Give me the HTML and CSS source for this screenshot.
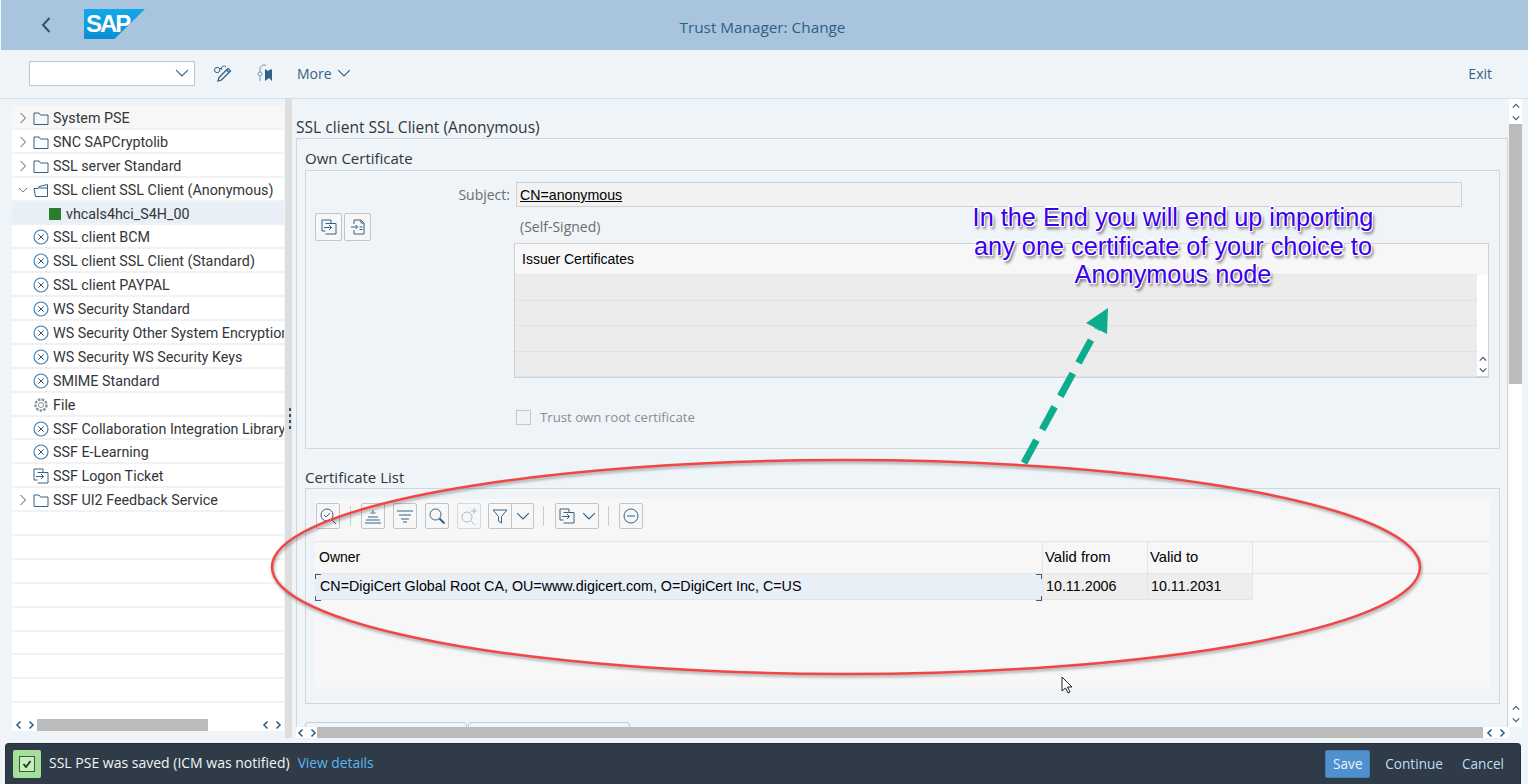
FILE: index.html
```html
<!DOCTYPE html>
<html lang="en">
<head>
    <meta charset="UTF-8">
    <title>Trust Manager: Change</title>
    <link rel="stylesheet" href="styles.css">
</head>
<body>

    <svg class="defs" width="0" height="0">
        <symbol id="i-folder" viewBox="0 0 16 16"><path d="M1 14.500V3h5l1.500 2h7.500v9.500z" fill="none" stroke="currentColor"/></symbol>
        <symbol id="i-folder-open" viewBox="0 0 16 16"><path d="M2.500 14.500L1 6.500h4l1-2 8.500-2v12zM14.500 6H6" fill="none" stroke="currentColor"/></symbol>
        <symbol id="i-cross" viewBox="0 0 16 16"><circle cx="8" cy="8" r="7" fill="none" stroke="#3f7fb5" stroke-width="1.200"/><path d="M5.300 5.300l5.400 5.400M10.700 5.300l-5.400 5.400" fill="none" stroke="#3d4f60"/></symbol>
        <symbol id="i-gear" viewBox="0 0 16 16"><circle cx="8" cy="8" r="5.500" fill="none" stroke="#8a9199" stroke-width="2.400" stroke-dasharray="2.500 1.200"/><circle cx="8" cy="8" r="2.500" fill="none" stroke="#7f93a6"/></symbol>
        <symbol id="i-import" viewBox="0 0 16 16"><path d="M10 4.500V1H1v11h3.500M4.500 4.500h10.500V15H4.500M3 8.500h7.500M8 6l2.500 2.500L8 11" fill="none" stroke="currentColor"/></symbol>
        <symbol id="i-export" viewBox="0 0 16 16"><path d="M4 5V1h7l3 3v11H4v-4M11 1v3h3M1 8h6.500M5.500 6L7.500 8l-2 2M9.500 8h3M9.500 10.500h3" fill="none" stroke="currentColor"/></symbol>
        <symbol id="i-chev-right" viewBox="0 0 10 12"><path d="M2.500 1l5 5-5 5" fill="none" stroke="currentColor"/></symbol>
        <symbol id="i-chev-down" viewBox="0 0 12 10"><path d="M1 2.500l5 5 5-5" fill="none" stroke="currentColor"/></symbol>
        <symbol id="i-small-left" viewBox="0 0 8 10"><path d="M5.500 1.500L2 5l3.500 3.500" fill="none" stroke="currentColor" stroke-width="1.600"/></symbol>
        <symbol id="i-small-right" viewBox="0 0 8 10"><path d="M2.500 1.500L6 5 2.500 8.500" fill="none" stroke="currentColor" stroke-width="1.600"/></symbol>
        <symbol id="i-small-up" viewBox="0 0 12 10"><path d="M2 7l4-4 4 4" fill="none" stroke="currentColor" stroke-width="1.500"/></symbol>
        <symbol id="i-small-down" viewBox="0 0 12 10"><path d="M2 3l4 4 4-4" fill="none" stroke="currentColor" stroke-width="1.500"/></symbol>
    </svg>

    <header class="shell-bar">
        <div class="shell-left">
            <svg class="back" width="12" height="18" viewBox="0 0 12 18"><path d="M9.500 2L3 9l6.500 7" fill="none" stroke="currentColor" stroke-width="2"/></svg>
            <div class="logo"><span>SAP</span></div>
        </div>
        <div class="shell-title">Trust Manager: Change</div>
    </header>

    <div class="toolbar">
        <div class="cmd-field"><svg width="16" height="12"><use href="#i-chev-down"/></svg></div>
        <svg class="tool-icon" width="20" height="20" viewBox="0 0 20 20"><path d="M1.500 7a2.700 2.700 0 1 0 5.400 0 2.700 2.700 0 1 0-5.400 0M7 5.500h2M9 7a2.500 2.500 0 0 1 4-3" fill="none" stroke="currentColor"/><path d="M5 18l1-3.500 9-9 2.500 2.500-9 9zM13.500 7l2.500 2.500" fill="none" stroke="currentColor" stroke-width="1.300"/></svg>
        <svg class="tool-icon second" width="20" height="20" viewBox="0 0 20 20"><path d="M5 9V6a4 4 0 0 1 6-3.500M3 11a2 2 0 1 0 4 0 2 2 0 1 0-4 0M5 13v5" fill="none" stroke="#7d96ad"/><path d="M10 6l3 2 3-2 1 1v11l-3-3-4 3z" fill="currentColor"/></svg>
        <span class="more">More</span>
        <svg class="more-chev" width="14" height="12" viewBox="0 0 12 10"><use href="#i-chev-down"/></svg>
        <span class="exit">Exit</span>
    </div>

    <main class="body-area">
        <aside class="tree-pane">
            <div class="tree-rows">
                <div class="tree-row head"><svg class="exp" width="10" height="12"><use href="#i-chev-right"/></svg><svg class="ico" width="16" height="16"><use href="#i-folder"/></svg><span>System PSE</span></div>
                <div class="tree-row"><svg class="exp" width="10" height="12"><use href="#i-chev-right"/></svg><svg class="ico" width="16" height="16"><use href="#i-folder"/></svg><span>SNC SAPCryptolib</span></div>
                <div class="tree-row"><svg class="exp" width="10" height="12"><use href="#i-chev-right"/></svg><svg class="ico" width="16" height="16"><use href="#i-folder"/></svg><span>SSL server Standard</span></div>
                <div class="tree-row"><svg class="exp" width="10" height="12" viewBox="0 0 12 10"><use href="#i-chev-down"/></svg><svg class="ico" width="16" height="16"><use href="#i-folder-open"/></svg><span>SSL client SSL Client (Anonymous)</span></div>
                <div class="tree-row selected"><i class="green-square"></i><span>vhcals4hci_S4H_00</span></div>
                <div class="tree-row leaf"><svg class="ico" width="16" height="16"><use href="#i-cross"/></svg><span>SSL client BCM</span></div>
                <div class="tree-row leaf"><svg class="ico" width="16" height="16"><use href="#i-cross"/></svg><span>SSL client SSL Client (Standard)</span></div>
                <div class="tree-row leaf"><svg class="ico" width="16" height="16"><use href="#i-cross"/></svg><span>SSL client PAYPAL</span></div>
                <div class="tree-row leaf"><svg class="ico" width="16" height="16"><use href="#i-cross"/></svg><span>WS Security Standard</span></div>
                <div class="tree-row leaf"><svg class="ico" width="16" height="16"><use href="#i-cross"/></svg><span>WS Security Other System Encryption</span></div>
                <div class="tree-row leaf"><svg class="ico" width="16" height="16"><use href="#i-cross"/></svg><span>WS Security WS Security Keys</span></div>
                <div class="tree-row leaf"><svg class="ico" width="16" height="16"><use href="#i-cross"/></svg><span>SMIME Standard</span></div>
                <div class="tree-row leaf"><svg class="ico" width="16" height="16"><use href="#i-gear"/></svg><span>File</span></div>
                <div class="tree-row leaf"><svg class="ico" width="16" height="16"><use href="#i-cross"/></svg><span>SSF Collaboration Integration Library</span></div>
                <div class="tree-row leaf"><svg class="ico" width="16" height="16"><use href="#i-cross"/></svg><span>SSF E-Learning</span></div>
                <div class="tree-row leaf"><svg class="ico" width="16" height="16"><use href="#i-import"/></svg><span>SSF Logon Ticket</span></div>
                <div class="tree-row"><svg class="exp" width="10" height="12"><use href="#i-chev-right"/></svg><svg class="ico" width="16" height="16"><use href="#i-folder"/></svg><span>SSF UI2 Feedback Service</span></div>
                <div class="tree-row"></div>
                <div class="tree-row"></div>
                <div class="tree-row"></div>
                <div class="tree-row"></div>
                <div class="tree-row"></div>
                <div class="tree-row"></div>
                <div class="tree-row"></div>
                <div class="tree-row"></div>
                <div class="tree-row"></div>
            </div>
            <div class="hscroll tree-hscroll">
                <span class="arrows"><svg width="8" height="10"><use href="#i-small-left"/></svg><svg width="8" height="10"><use href="#i-small-right"/></svg></span>
                <div class="track"><i class="thumb"></i></div>
                <span class="arrows"><svg width="8" height="10"><use href="#i-small-left"/></svg><svg width="8" height="10"><use href="#i-small-right"/></svg></span>
            </div>
        </aside>

        <div class="splitter"><i></i><i></i><i></i><i></i></div>

        <section class="content-pane">
            <div class="scroll-area">
                <h1 class="page-title">SSL client SSL Client (Anonymous)</h1>
                <div class="frame">
                    <h2 class="legend">Own Certificate</h2>
                    <div class="group own-cert">
                        <label class="subject-label">Subject:</label>
                        <div class="subject-field">CN=anonymous</div>
                        <div class="cert-buttons">
                            <button class="icon-btn"><svg width="16" height="16"><use href="#i-import"/></svg></button>
                            <button class="icon-btn"><svg width="16" height="16"><use href="#i-export"/></svg></button>
                        </div>
                        <div class="self-signed">(Self-Signed)</div>
                        <div class="issuer-table">
                            <div class="issuer-main">
                                <div class="issuer-head">Issuer Certificates</div>
                                <div class="issuer-row"></div>
                                <div class="issuer-row"></div>
                                <div class="issuer-row"></div>
                                <div class="issuer-row"></div>
                            </div>
                            <div class="issuer-scroll">
                                <svg width="10" height="8" viewBox="0 0 12 10"><use href="#i-small-up"/></svg>
                                <svg width="10" height="8" viewBox="0 0 12 10"><use href="#i-small-down"/></svg>
                            </div>
                        </div>
                        <div class="trust-root"><i class="checkbox"></i><span>Trust own root certificate</span></div>
                    </div>

                    <h2 class="legend list-legend">Certificate List</h2>
                    <div class="group cert-list">
                        <div class="alv-toolbar">
                            <button class="tb-btn"><svg width="20" height="20" viewBox="0 0 20 20"><circle cx="9" cy="9" r="6" fill="none" stroke="currentColor"/><path d="M6 9l2 2 4-4M13 13l5 5" fill="none" stroke="currentColor"/></svg></button>
                            <i class="tb-sep"></i>
                            <button class="tb-btn"><svg width="18" height="18" viewBox="0 0 18 18"><path d="M9 3v2M6.500 6h5M4 10h10M2 13h14M1 16h16" fill="none" stroke="currentColor"/></svg></button>
                            <button class="tb-btn"><svg width="18" height="18" viewBox="0 0 18 18"><path d="M1 4h16M3 8h12M5 12h8M7 15h4" fill="none" stroke="currentColor"/></svg></button>
                            <button class="tb-btn"><svg width="18" height="18" viewBox="0 0 18 18"><circle cx="7.500" cy="7.500" r="5.500" fill="none" stroke="currentColor"/><path d="M11.500 11.500l5 5" fill="none" stroke="currentColor" stroke-width="2"/></svg></button>
                            <button class="tb-btn off"><svg width="20" height="20" viewBox="0 0 20 20"><circle cx="8" cy="11" r="5" fill="none" stroke="currentColor"/><path d="M12 15l4 4M15 2v6M12 5h6" fill="none" stroke="currentColor"/></svg></button>
                            <div class="tb-split">
                                <span><svg width="18" height="18" viewBox="0 0 18 18"><path d="M2 3h14l-5.500 6.500V16l-3-2V9.500z" fill="none" stroke="currentColor"/></svg></span>
                                <span><svg width="14" height="12" viewBox="0 0 12 10"><use href="#i-chev-down"/></svg></span>
                            </div>
                            <i class="tb-sep"></i>
                            <div class="tb-combo">
                                <svg width="16" height="16"><use href="#i-import"/></svg>
                                <svg width="14" height="12" viewBox="0 0 12 10"><use href="#i-chev-down"/></svg>
                            </div>
                            <i class="tb-sep"></i>
                            <button class="tb-btn"><svg width="18" height="18" viewBox="0 0 18 18"><circle cx="9" cy="9" r="7" fill="none" stroke="currentColor"/><path d="M5 9h8" fill="none" stroke="currentColor"/></svg></button>
                        </div>
                        <div class="alv-table">
                            <div class="alv-line alv-head">
                                <div class="col-owner">Owner</div>
                                <div class="col-date">Valid from</div>
                                <div class="col-date">Valid to</div>
                            </div>
                            <div class="alv-line alv-data">
                                <div class="col-owner current">CN=DigiCert Global Root CA, OU=www.digicert.com, O=DigiCert Inc, C=US</div>
                                <div class="col-date">10.11.2006</div>
                                <div class="col-date">10.11.2031</div>
                            </div>
                        </div>
                    </div>

                    <div class="tabs"><span></span><span></span></div>
                </div>
            </div>

            <div class="vscroll">
                <div class="vscroll-arrows">
                    <svg width="10" height="8" viewBox="0 0 12 10"><use href="#i-small-up"/></svg>
                    <svg width="10" height="8" viewBox="0 0 12 10"><use href="#i-small-down"/></svg>
                </div>
                <i class="vthumb"></i>
                <div class="vscroll-arrows bottom">
                    <svg width="10" height="8" viewBox="0 0 12 10"><use href="#i-small-up"/></svg>
                    <svg width="10" height="8" viewBox="0 0 12 10"><use href="#i-small-down"/></svg>
                </div>
            </div>

            <div class="hscroll content-hscroll">
                <span class="arrows"><svg width="8" height="10"><use href="#i-small-left"/></svg><svg width="8" height="10"><use href="#i-small-right"/></svg></span>
                <div class="track"><i class="thumb"></i></div>
                <span class="arrows"><svg width="8" height="10"><use href="#i-small-left"/></svg><svg width="8" height="10"><use href="#i-small-right"/></svg></span>
            </div>
        </section>
    </main>

    <footer class="message-bar">
        <div class="msg-icon"><i><svg width="12" height="12" viewBox="0 0 12 12"><path d="M2.500 6l2.500 3 4.500-6" fill="none" stroke="#1d3b1d" stroke-width="1.800"/></svg></i></div>
        <span class="msg-text">SSL PSE was saved (ICM was notified)</span>
        <a class="msg-link">View details</a>
        <div class="msg-actions">
            <button class="btn-save">Save</button>
            <button class="btn-plain">Continue</button>
            <button class="btn-plain">Cancel</button>
        </div>
    </footer>

    <!-- annotations drawn over the screenshot -->
    <svg class="annotations" width="1528" height="784" viewBox="0 0 1528 784">
        <ellipse class="ring" cx="846" cy="567" rx="574" ry="107"/>
        <path class="arrow-line" d="M1024 463L1097 329"/>
        <path class="arrow-head" d="M1108 308L1086 323L1107 334z"/>
        <path class="pointer" d="M1062 677v14l3.500-3 2.500 5 2-1-2.500-5h4.500z"/>
    </svg>
    <div class="note">In the End you will end up importing<br>any one certificate of your choice to<br>Anonymous node</div>

</body>
</html>
```

FILE: styles.css
```css
* {
    box-sizing: border-box;
}
html, body {
    margin: 0;
    height: 100%;
}
body {
    width: 1528px;
    height: 784px;
    overflow: hidden;
    display: flex;
    flex-direction: column;
    position: relative;
    background-color: #eff4f9;
    color: #32363a;
    font-family: 'Open Sans', 'Liberation Sans', sans-serif;
    font-size: 14px;
}
button {
    font-family: inherit;
}
.defs {
    position: absolute;
}

/* shell */
.shell-bar {
    height: 50px;
    flex: none;
    margin-left: 1px;
    display: grid;
    grid-template-columns: 1fr auto 1fr;
    align-items: center;
    background-color: #a9c5de;
}
.shell-left {
    display: flex;
    align-items: center;
}
.back {
    color: #2d5474;
    margin-left: 39px;
}
.logo {
    width: 61px;
    height: 30px;
    margin: -2px 0 0 32px;
    background: linear-gradient(#12a8ea, #0a8fd2);
    clip-path: polygon(0 0, 100% 0, 50% 100%, 0 100%);
    color: white;
    font: bold 24px/30px 'Liberation Sans', sans-serif;
    letter-spacing: -2px;
    padding-left: 2px;
}
.shell-title {
    color: #2f5f86;
    font-size: 15.300px;
    margin: 3px 4px 0 0;
}

.toolbar {
    height: 49px;
    flex: none;
    display: flex;
    align-items: center;
    padding: 0 0 2px 29px;
    border-bottom: 1px solid #d3e0ec;
    color: #346187;
}
.cmd-field {
    width: 166px;
    height: 25px;
    background-color: white;
    border: 1px solid #bfc5ca;
    display: flex;
    align-items: center;
    justify-content: flex-end;
    padding-right: 5px;
}
.cmd-field svg {
    width: 14px;
}
.tool-icon {
    margin-left: 18px;
}
.tool-icon.second {
    margin-left: 22px;
}
.more {
    margin-left: 22px;
}
.more-chev {
    margin-left: 5px;
}
.exit {
    margin-left: auto;
    margin-right: 36px;
}

/* main */
.body-area {
    flex: 1;
    min-height: 0;
    display: flex;
}
.tree-pane {
    width: 272px;
    margin: 7px 0 12px 12px;
    background-color: white;
    display: flex;
    flex-direction: column;
}
.tree-rows {
    flex: 1;
    min-height: 0;
    overflow: hidden;
}
.tree-row {
    height: 23.900px;
    display: flex;
    align-items: center;
    border-bottom: 2px solid #f2f2f2;
    padding: 2px 0 0 21px;
    white-space: nowrap;
    overflow: hidden;
    font-family: Roboto, 'Open Sans', sans-serif;
    font-size: 14.300px;
    color: #32363a;
}
.tree-row.head {
    background-color: #f7f7f7;
}
.tree-row.selected {
    background-color: #e8eff6;
    padding-left: 37px;
}
.tree-row .exp {
    flex: none;
    margin-left: -15px;
    color: #346187;
}
.ico {
    flex: none;
    color: #346187;
    margin-right: 4px;
    margin-left: 5px;
}
.tree-row.leaf .ico {
    margin-left: 0;
}
.tree-row span {
    flex: none;
}
.green-square {
    width: 12px;
    height: 12px;
    background-color: #2b7d2b;
    margin-right: 5px;
}

.hscroll {
    display: flex;
    align-items: stretch;
    background-color: white;
}
.arrows {
    flex: none;
    color: #346187;
    display: flex;
    align-items: center;
    justify-content: center;
    gap: 4px;
}
.track {
    flex: 1;
}
.thumb {
    display: block;
    height: 100%;
    background-color: #bbbbbb;
}
.tree-hscroll {
    height: 12px;
    flex: none;
}
.tree-hscroll .arrows {
    width: 25px;
}
.tree-hscroll .track .thumb {
    width: 171px;
}

.splitter {
    width: 7px;
    margin: 0 4px 5px 1px;
    background-color: #dedede;
    display: flex;
    flex-direction: column;
    align-items: center;
    justify-content: center;
    gap: 3px;
    padding: 0 0 0 3px;
}
.splitter i {
    width: 2px;
    height: 3px;
    background-color: #2d5474;
}

.content-pane {
    width: 1226px;
    margin-bottom: 5px;
    display: grid;
    grid-template-columns: 1fr 13px;
    grid-template-rows: 1fr 11px;
}
.scroll-area {
    overflow: hidden;
    padding-top: 18px;
}
.page-title {
    margin: 0;
    font-size: 15.600px;
    font-weight: normal;
    line-height: 21px;
    color: #32363a;
}
.frame {
    border: 1px solid #d2d6da;
    border-bottom: 0;
    padding: 0 7px 0 8px;
    margin-right: 1px;
}
.legend {
    margin: 0;
    font-size: 15px;
    font-weight: normal;
    line-height: 20px;
    padding-top: 9px;
    height: 31px;
    color: #32363a;
}
.list-legend {
    height: 39px;
    padding-top: 18px;
}
.group {
    border: 1px solid #d2d6da;
}

/* own certificate */
.own-cert {
    height: 279px;
    display: grid;
    grid-template-columns: 195px 973px;
    column-gap: 6px;
    grid-template-rows: 25px 36px 135px auto;
    padding: 11px 0 0 9px;
}
.subject-label {
    text-align: right;
    color: #6a6d70;
    line-height: 25px;
}
.subject-field {
    width: 946px;
    border: 1px solid #cdd1d5;
    background-color: #f2f2f2;
    padding-left: 3px;
    line-height: 25px;
    color: #000;
    font-family: 'Liberation Sans', sans-serif;
    font-size: 14.200px;
    text-decoration: underline;
}
.cert-buttons {
    grid-row: 2 / span 2;
    display: flex;
    align-items: flex-start;
    gap: 2px;
    margin-top: 6px;
}
.icon-btn {
    width: 27px;
    height: 28px;
    padding: 0;
    border: 1px solid #bfc5ca;
    border-radius: 2px;
    background-color: #f7f7f7;
    color: #346187;
    display: flex;
    align-items: center;
    justify-content: center;
}
.self-signed {
    grid-column: 2;
    grid-row: 2;
    align-self: end;
    margin: 0 0 7px 4px;
    line-height: 19px;
    color: #6a6d70;
}
.issuer-table {
    grid-column: 2;
    grid-row: 3;
    display: flex;
    margin-left: -2px;
    width: 975px;
    border: 1px solid #cfd2d5;
    border-bottom-width: 2px;
    background-color: white;
}
.issuer-main {
    flex: 1;
}
.issuer-head {
    height: 31px;
    line-height: 30px;
    padding-left: 7px;
    background-color: #f7f7f7;
    font-family: 'Liberation Sans', sans-serif;
    color: #000;
    border-bottom: 1px solid #e5e5e5;
}
.issuer-row {
    height: 25.500px;
    background-color: #ececec;
    border-bottom: 1px solid #e2e2e2;
}
.issuer-scroll {
    width: 11px;
    color: #346187;
    display: flex;
    flex-direction: column;
    justify-content: flex-end;
    align-items: center;
    gap: 3px;
    padding-bottom: 2px;
    background: linear-gradient(#f7f7f7 31px, white 31px);
}
.trust-root {
    grid-column: 2;
    grid-row: 4;
    margin-top: 32px;
    display: flex;
    align-items: center;
    height: 15px;
    font-size: 13.200px;
    color: #8a8d90;
}
.trust-root span {
    margin-bottom: 2px;
}
.checkbox {
    width: 15px;
    height: 15px;
    border: 1px solid #c4c8cc;
    background-color: #f2f2f2;
    margin-right: 9px;
}

/* certificate list */
.cert-list {
    height: 216px;
    padding: 10px 9px 0 9px;
}
.alv-toolbar {
    height: 42px;
    padding: 0 0 9px 1px;
    display: flex;
    align-items: center;
    gap: 8px;
    color: #346187;
    background-color: #f7f7f7;
}
.tb-btn {
    width: 24px;
    height: 26px;
    padding: 0;
    border: 1px solid #bfc5ca;
    border-radius: 2px;
    background-color: #f7f7f7;
    color: #346187;
    display: flex;
    align-items: center;
    justify-content: center;
}
.tb-btn.off {
    color: #a9bccd;
    border-color: #d6d9dc;
}
.tb-sep {
    width: 1px;
    height: 20px;
    background-color: #c8ccd0;
    margin: 0 2px;
}
.tb-split, .tb-combo {
    height: 26px;
    display: flex;
    align-items: center;
    border: 1px solid #bfc5ca;
    border-radius: 2px;
    background-color: #f7f7f7;
}
.tb-split {
    margin-left: -1px;
    margin-right: -1px;
}
.tb-split span {
    width: 22px;
    height: 100%;
    display: flex;
    align-items: center;
    justify-content: center;
}
.tb-split span + span {
    border-left: 1px solid #bfc5ca;
}
.tb-combo {
    width: 44px;
    gap: 7px;
    padding-left: 3px;
    margin-left: 1px;
    margin-right: -1px;
}
.alv-table {
    height: 146px;
    background-color: #f7f7f7;
    border-top: 1px solid #e6e6e6;
    font-family: 'Liberation Sans', sans-serif;
    color: #000;
}
.alv-line {
    display: grid;
    grid-template-columns: 728px 105px 105px;
}
.alv-line > div {
    border-right: 1px solid #e4e4e4;
}
.alv-head {
    height: 32px;
    line-height: 30px;
    border-bottom: 1px solid #e6e6e6;
}
.alv-head > div {
    padding-left: 4px;
}
.alv-head .col-date {
    padding-left: 2px;
    font-size: 14.800px;
}
.alv-data {
    height: 26px;
    line-height: 24px;
    font-size: 14.300px;
}
.alv-data > div {
    border-bottom: 1px solid #e4e4e4;
}
.alv-data .col-date {
    background-color: #eeeeee;
    padding-left: 3px;
}
.alv-data .col-owner.current {
    background-color: #e8eff6;
    padding-left: 5px;
    position: relative;
}
/* corner marks of the focused cell */
.current::before, .current::after {
    content: '';
    position: absolute;
    width: 5px;
    height: 100%;
    top: 0;
    border: 1px solid #346187;
    clip-path: polygon(0 0, 100% 0, 100% 5px, 0 5px, 0 calc(100% - 5px), 100% calc(100% - 5px), 100% 100%, 0 100%);
}
.current::before {
    left: 0;
    border-right: 0;
}
.current::after {
    right: 0;
    border-left: 0;
}
.tabs {
    display: flex;
    gap: 1px;
    margin-top: 18px;
}
.tabs span {
    width: 162px;
    height: 12px;
    border: 1px solid #c8ccd0;
    border-radius: 3px 3px 0 0;
}

/* right scrollbar */
.vscroll {
    grid-row: 1;
    grid-column: 2;
    display: flex;
    flex-direction: column;
    background-color: white;
    color: #346187;
    padding-top: 3px;
}
.vscroll-arrows {
    height: 22px;
    display: flex;
    flex-direction: column;
    align-items: center;
    gap: 4px;
}
.vscroll-arrows.bottom {
    margin-top: auto;
    margin-bottom: 1px;
}
.vthumb {
    height: 260px;
    background-color: #bbbbbb;
}
.content-hscroll .arrows {
    width: 21px;
}
.content-hscroll .arrows:last-child {
    width: 26px;
}
.content-hscroll .thumb {
    width: 100%;
}

/* message strip */
.message-bar {
    height: 41px;
    flex: none;
    margin: 0 7px 0 5px;
    padding: 0 15px 0 7px;
    display: flex;
    align-items: center;
    background-color: #2f3c48;
    border: 1px solid #23303b;
    border-bottom: 0;
    border-radius: 4px 4px 0 0;
    color: #f2f5f7;
}
.msg-icon {
    width: 28px;
    height: 28px;
    border-radius: 2px;
    background-color: #a4e09a;
    display: flex;
    align-items: center;
    justify-content: center;
}
.msg-icon i {
    width: 16px;
    height: 16px;
    border: 1px solid #3c5a3c;
    background-color: #c8edc0;
    display: flex;
    align-items: center;
    justify-content: center;
}
.msg-text {
    margin: 0 0 3px 8px;
}
.msg-link {
    margin: 0 0 3px 8px;
    font-size: 13.800px;
    color: #5bb5ee;
}
.msg-actions {
    margin-left: auto;
    display: flex;
    align-items: center;
}
.btn-save, .btn-plain {
    height: 28px;
    padding: 0 0 2px;
    border: 1px solid transparent;
    border-radius: 2px;
    background: none;
    font-size: 13.600px;
    color: #bcdcf5;
}
.btn-save {
    width: 45px;
    background-color: #4f91cd;
    border-color: #3d7fb9;
    color: #eaf4fc;
}
.btn-plain {
    margin-left: 14px;
}
.btn-plain:last-child {
    margin-left: 17px;
}

/* annotations */
.annotations {
    position: absolute;
    left: 0;
    top: 0;
    pointer-events: none;
}
.ring {
    fill: none;
    stroke: #f24545;
    stroke-width: 2.500;
    filter: drop-shadow(1px 2px 1.500px rgba(0,0,0,.35));
}
.arrow-line {
    fill: none;
    stroke: #0aae8c;
    stroke-width: 7;
    stroke-dasharray: 26 12;
}
.arrow-head {
    fill: #0aae8c;
}
.pointer {
    fill: white;
    stroke: #222;
}
.note {
    position: absolute;
    left: 948px;
    top: 203px;
    width: 450px;
    text-align: center;
    font: 25.300px/28.500px 'Liberation Sans', sans-serif;
    color: #3a00ee;
    text-shadow: -1px -1px 0 white, 1px -1px 0 white, -1px 1px 0 white, 1px 1px 0 white, 0 -2px 0 white, 2px 3px 3px #666;
}
```
